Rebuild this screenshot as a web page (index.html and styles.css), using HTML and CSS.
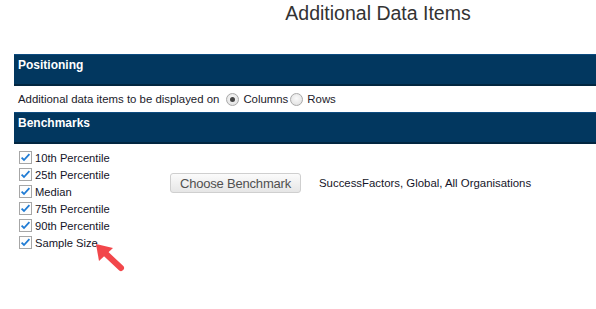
FILE: index.html
```html
<!DOCTYPE html>
<html>
<head>
<meta charset="utf-8">
<link rel="stylesheet" href="styles.css">
</head>
<body>
<div class="page">
  <h1 class="title">Additional Data Items</h1>

  <div class="bar">Positioning</div>
  <div class="position-row">
    <span class="lead">Additional data items to be displayed on</span>
    <span class="radio checked"></span><span>Columns</span>
    <span class="radio"></span><span>Rows</span>
  </div>

  <div class="bar">Benchmarks</div>
  <div class="bench">
    <ul class="checks">
      <li><svg class="cb" viewBox="0 0 13 13"><rect x="0.5" y="0.5" width="12" height="12" fill="#fdfdfd" stroke="#a6a6a6"/><path d="M2.6 6.6 L5 9 L10.4 3.2" fill="none" stroke="#1f7bd4" stroke-width="1.8"/></svg>10th Percentile</li>
      <li><svg class="cb" viewBox="0 0 13 13"><rect x="0.5" y="0.5" width="12" height="12" fill="#fdfdfd" stroke="#a6a6a6"/><path d="M2.6 6.6 L5 9 L10.4 3.2" fill="none" stroke="#1f7bd4" stroke-width="1.8"/></svg>25th Percentile</li>
      <li><svg class="cb" viewBox="0 0 13 13"><rect x="0.5" y="0.5" width="12" height="12" fill="#fdfdfd" stroke="#a6a6a6"/><path d="M2.6 6.6 L5 9 L10.4 3.2" fill="none" stroke="#1f7bd4" stroke-width="1.8"/></svg>Median</li>
      <li><svg class="cb" viewBox="0 0 13 13"><rect x="0.5" y="0.5" width="12" height="12" fill="#fdfdfd" stroke="#a6a6a6"/><path d="M2.6 6.6 L5 9 L10.4 3.2" fill="none" stroke="#1f7bd4" stroke-width="1.8"/></svg>75th Percentile</li>
      <li><svg class="cb" viewBox="0 0 13 13"><rect x="0.5" y="0.5" width="12" height="12" fill="#fdfdfd" stroke="#a6a6a6"/><path d="M2.6 6.6 L5 9 L10.4 3.2" fill="none" stroke="#1f7bd4" stroke-width="1.8"/></svg>90th Percentile</li>
      <li class="last"><svg class="cb" viewBox="0 0 13 13"><rect x="0.5" y="0.5" width="12" height="12" fill="#fdfdfd" stroke="#a6a6a6"/><path d="M2.6 6.6 L5 9 L10.4 3.2" fill="none" stroke="#1f7bd4" stroke-width="1.8"/></svg>Sample Size
        <svg class="arrow" width="30" height="30" viewBox="0 0 30 30">
          <line x1="8" y1="8" x2="25" y2="24" stroke="#f2474b" stroke-width="6" stroke-linecap="round"/>
          <polygon points="0,0 3,17 17,4" fill="#f2474b"/>
        </svg>
      </li>
    </ul>
    <div class="chooser">
      <button class="btn">Choose Benchmark</button>
      <span class="bench-name">SuccessFactors, Global, All Organisations</span>
    </div>
  </div>
</div>
</body>
</html>
```

FILE: styles.css
```css
html, body {
  margin: 0;
  padding: 0;
  background: #fff;
}
body {
  font-family: "Liberation Sans", Arial, sans-serif;
  min-height: 309px;
}
.page {
  padding-left: 14px;
}
.title {
  margin: 0;
  height: 54px;
  padding: 1px 0 0 146px;
  box-sizing: border-box;
  text-align: center;
  font-weight: normal;
  font-size: 19.5px;
  line-height: 24px;
  color: #333;
}
.bar {
  background: #02375f;
  border-top: 1px solid #0d4b80;
  border-bottom: 2px solid #022640;
  color: #fff;
  font-weight: bold;
  font-size: 12px;
  line-height: 14px;
  padding: 3px 0 0 4px;
  height: 26px;
}
.position-row {
  height: 26px;
  display: flex;
  align-items: center;
  padding-left: 4px;
  font-size: 11.4px;
  color: #1a1a2a;
}
.lead {
  margin-right: 5px;
}
.radio {
  width: 11px;
  height: 11px;
  border: 1px solid #a9a9a9;
  border-radius: 50%;
  background: radial-gradient(circle at 50% 40%, #fafafa, #dcdcdc);
  margin-right: 4px;
  margin-left: 2px;
  position: relative;
}
.radio.checked::after {
  content: "";
  position: absolute;
  left: 3px;
  top: 3px;
  width: 5px;
  height: 5px;
  border-radius: 50%;
  background: #444;
}
.bench {
  display: flex;
  padding-top: 5px;
}
.checks {
  list-style: none;
  margin: 0;
  padding: 0 0 0 5px;
  width: 151px;
}
.checks li {
  height: 17px;
  display: flex;
  align-items: center;
  font-size: 11.2px;
  color: #141428;
}
.checks li.last {
  position: relative;
}
.cb {
  width: 13px;
  height: 13px;
  margin-right: 3px;
  flex: none;
}
.chooser {
  display: flex;
  align-items: center;
  margin-top: 24px;
  align-self: flex-start;
}
.btn {
  font-family: "Liberation Sans", Arial, sans-serif;
  font-size: 13px;
  color: #505050;
  height: 20px;
  width: 131px;
  padding: 0;
  border: 1px solid #cfcfcf;
  border-radius: 3px;
  background: linear-gradient(#fbfbfb, #e6e6e6);
  letter-spacing: -0.2px;
}
.bench-name {
  margin-left: 18px;
  font-size: 11.4px;
  color: #141428;
}
.arrow {
  position: absolute;
  left: 77px;
  top: 10px;
}
```
